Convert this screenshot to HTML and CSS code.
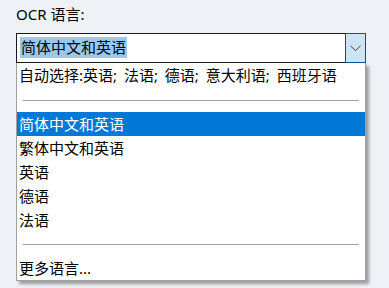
FILE: index.html
```html
<!DOCTYPE html>
<html lang="zh-CN">
<head>
<meta charset="utf-8">
<link rel="stylesheet" href="styles.css">
</head>
<body>
<div class="panel">
  <div class="label">OCR 语言:</div>
  <div class="combo">
    <div class="field"><span class="sel">简体中文和英语</span></div>
    <div class="btn">
      <svg width="11" height="7" viewBox="0 0 11 7"><path d="M0.5 0.8 L5.5 5.6 L10.5 0.8" fill="none" stroke="#3c3c3c" stroke-width="1"/></svg>
    </div>
  </div>
  <div class="list">
    <div class="item auto">自动选择:英语; 法语; 德语; 意大利语; 西班牙语</div>
    <div class="sep"></div>
    <div class="item active">简体中文和英语</div>
    <div class="item">繁体中文和英语</div>
    <div class="item">英语</div>
    <div class="item">德语</div>
    <div class="item">法语</div>
    <div class="sep sep2"></div>
    <div class="item">更多语言...</div>
  </div>
</div>
</body>
</html>
```
FILE: styles.css
```css
html, body {
  margin: 0;
  padding: 0;
}
body {
  background: #eef1f5;
  font-family: "Noto Sans", "Noto Sans CJK SC", sans-serif;
  font-size: 15px;
  color: #000;
  width: 389px;
  height: 288px;
  overflow: hidden;
}
.panel {
  padding: 4px 0 0 16px;
  width: 350px;
}
.label {
  height: 20px;
  line-height: 20px;
  margin-bottom: 9px;
}
.combo {
  display: flex;
  height: 30px;
}
.field {
  flex: 1;
  border: 1px solid #1a1a1a;
  border-right: none;
  background: #fff;
  display: flex;
  align-items: center;
  padding-left: 3px;
  padding-bottom: 1px;
}
.sel {
  background: #99c9ef;
  line-height: 21px;
  height: 21px;
  padding: 0 1px;
}
.btn {
  width: 19px;
  border: 1px solid #005499;
  background: #cce4f7;
  display: flex;
  align-items: center;
  justify-content: center;
}
.list {
  background: #fff;
  border: 1px solid #a0a0a0;
  border-top: none;
  box-shadow: 3px 3px 3px rgba(0, 0, 0, 0.35);
  height: 217px;
}
.item {
  height: 24px;
  line-height: 24px;
  padding-left: 2px;
  white-space: nowrap;
}
.item.auto {
  word-spacing: 3px;
}
.item.active {
  background: #0078d7;
  color: #fff;
}
.sep {
  height: 25px;
  display: flex;
  align-items: center;
  padding: 0 6px;
}
.sep::before {
  content: "";
  display: block;
  flex: 1;
  height: 1px;
  background: #a0a0a0;
  margin-top: 1px;
}
.sep2 {
  height: 24px;
}
.sep2::before {
  margin-top: 0;
}
```
